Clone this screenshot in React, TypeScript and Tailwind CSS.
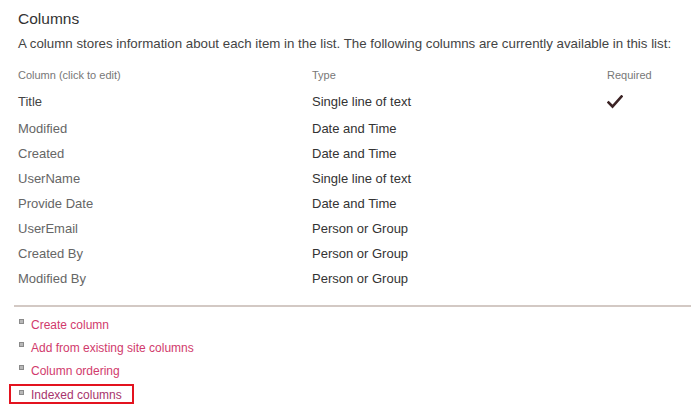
import React from 'react';

interface ColumnRow {
  name: string;
  type: string;
  required?: boolean;
}

const rows: ColumnRow[] = [
  { name: 'Title', type: 'Single line of text', required: true },
  { name: 'Modified', type: 'Date and Time' },
  { name: 'Created', type: 'Date and Time' },
  { name: 'UserName', type: 'Single line of text' },
  { name: 'Provide Date', type: 'Date and Time' },
  { name: 'UserEmail', type: 'Person or Group' },
  { name: 'Created By', type: 'Person or Group' },
  { name: 'Modified By', type: 'Person or Group' },
];

const links = ['Create column', 'Add from existing site columns', 'Column ordering'];

const Bullet = () => (
  <span className="w-[5px] h-[5px] mt-[4px] mr-[7px] shrink-0 bg-[#b8b8b8] border border-[#8a8a8a]" />
);

const Check = () => (
  <svg width="16" height="14" viewBox="0 0 16 14" className="block">
    <path d="M1.5 7.5 L5.5 11.5 L14.5 1.5" fill="none" stroke="#3b2324" strokeWidth="2.6" strokeLinecap="square" />
  </svg>
);

const App: React.FC = () => {
  return (
    <div className="w-[691px] h-[407px] bg-white overflow-hidden pt-[9px] font-['Liberation_Sans',Arial,sans-serif]">
      <div className="pl-[18px]">
        <h2 className="h-5 leading-5 text-[15.5px] text-[#333]">Columns</h2>
        <p className="mt-[7px] h-4 leading-4 text-[13.3px] text-[#444] whitespace-nowrap">
          A column stores information about each item in the list. The following columns are currently available in this list:
        </p>

        <div className="mt-[15px] grid grid-cols-[294px_295px_1fr] h-4 leading-4 text-[11px] text-[#777]">
          <span>Column (click to edit)</span>
          <span>Type</span>
          <span>Required</span>
        </div>

        <div className="mt-[6px] flex flex-col">
          {rows.map((r, i) => (
            <div key={r.name}
              className={`grid grid-cols-[294px_295px_1fr] items-center h-[25px] text-[13px] ${i === 0 ? 'mb-[2px]' : ''}`}>
              <span className={i === 0 ? 'text-[#444]' : 'text-[#666]'}>{r.name}</span>
              <span className="text-[#333]">{r.type}</span>
              <span>{r.required && <Check />}</span>
            </div>
          ))}
        </div>
      </div>

      <div className="ml-[14px] mt-[14px] h-[2px] bg-[#d3c9c4]" />

      <ul className="pl-[19px] mt-[8px] flex flex-col text-[12px]">
        {links.map(l => (
          <li key={l} className="flex items-start h-[23px] leading-[23px]">
            <Bullet />
            <span className="-mt-[1px] text-[#d13a6c]">{l}</span>
          </li>
        ))}
        <li className="flex h-[23px]">
          <div className="-ml-[10px] w-[125px] h-[20px] flex items-start pl-[8px] border-2 border-[#e3131f]">
            <Bullet />
            <span className="leading-[19px] text-[#a8346d]">Indexed columns</span>
          </div>
        </li>
      </ul>
    </div>
  );
};

export default App;
